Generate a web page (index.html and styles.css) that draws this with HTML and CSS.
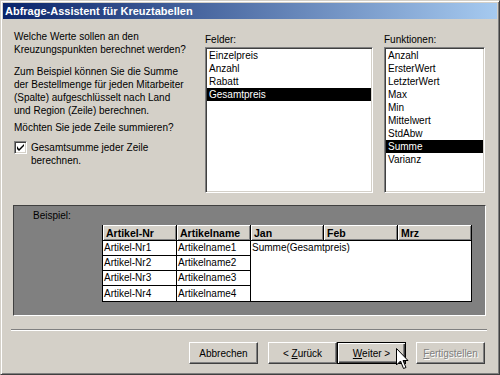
FILE: index.html
```html
<!DOCTYPE html>
<html lang="de">
<head>
  <meta charset="UTF-8">
  <title>Abfrage-Assistent für Kreuztabellen</title>
  <link rel="stylesheet" href="styles.css">
</head>
<body>
  <div class="window">
    <div class="titlebar">Abfrage-Assistent für Kreuztabellen</div>

    <div class="main">
      <!-- Oben: Text + Listen -->
      <div class="top">
        <div class="intro">
          <p class="p1">Welche Werte sollen an den<br>Kreuzungspunkten berechnet werden?</p>
          <p class="p2">Zum Beispiel können Sie die Summe<br>der Bestellmenge für jeden Mitarbeiter<br>(Spalte) aufgeschlüsselt nach Land<br>und Region (Zeile) berechnen.</p>
          <p class="p3">Möchten Sie jede Zeile summieren?</p>
          <label class="check">
            <span class="box">
              <svg width="7" height="7" viewBox="0 0 7 7"><path d="M0 2v3l2 2 5-5V-0L2 5z" fill="#000"/></svg>
            </span>
            <span>Gesamtsumme jeder Zeile<br>berechnen.</span>
          </label>
        </div>

        <div class="col-fields">
          <div class="label">Felder:</div>
          <ul class="listbox fields">
            <li>Einzelpreis</li>
            <li>Anzahl</li>
            <li>Rabatt</li>
            <li class="selected">Gesamtpreis</li>
          </ul>
        </div>

        <div class="col-funcs">
          <div class="label">Funktionen:</div>
          <ul class="listbox funcs">
            <li>Anzahl</li>
            <li>ErsterWert</li>
            <li>LetzterWert</li>
            <li>Max</li>
            <li>Min</li>
            <li>Mittelwert</li>
            <li>StdAbw</li>
            <li class="selected">Summe</li>
            <li>Varianz</li>
          </ul>
        </div>
      </div>

      <!-- Beispiel -->
      <div class="sample">
        <div class="sample-label">Beispiel:</div>
        <table class="sample-grid">
          <colgroup>
            <col class="c74"><col class="c74"><col class="c73"><col class="c74"><col class="c74">
          </colgroup>
          <tr>
            <th>Artikel-Nr</th><th>Artikelname</th><th>Jan</th><th>Feb</th><th>Mrz</th>
          </tr>
          <tr>
            <td>Artikel-Nr1</td><td>Artikelname1</td>
            <td class="values" colspan="3" rowspan="4">Summe(Gesamtpreis)</td>
          </tr>
          <tr><td>Artikel-Nr2</td><td>Artikelname2</td></tr>
          <tr><td>Artikel-Nr3</td><td>Artikelname3</td></tr>
          <tr class="last"><td>Artikel-Nr4</td><td>Artikelname4</td></tr>
        </table>
      </div>

      <div class="separator"></div>

      <div class="buttons">
        <button class="btn cancel">Abbrechen</button>
        <button class="btn">&lt; <u>Z</u>urück</button>
        <button class="btn default"><u>W</u>eiter &gt;</button>
        <button class="btn disabled"><u>F</u>ertigstellen</button>
      </div>
    </div>

    <!-- Mauszeiger -->
    <svg class="cursor" width="13" height="22" viewBox="0 0 13 22">
      <path d="M0.5 0.5 V17 L4.5 13 L7.5 20.5 L10 19.5 L7 12.5 H12 Z" fill="#fff" stroke="#000" stroke-width="1"/>
    </svg>
  </div>
</body>
</html>
```

FILE: styles.css
```css
/* Grundlayout */
* { box-sizing: border-box; }
body {
  margin: 0;
  font-family: "Liberation Sans", Arial, sans-serif;
  font-size: 10px;
  color: #000;
  background: #d4d0c8;
}
ul, p { margin: 0; padding: 0; list-style: none; }

/* Fenster */
.window {
  position: relative;
  width: 500px;
  height: 375px;
  background: #d4d0c8;
  border: 1px solid;
  border-color: #d4d0c8 #404040 #404040 #d4d0c8;
  box-shadow: inset 1px 1px #fff, inset -1px -1px #808080;
  padding: 2px;
}
.titlebar {
  height: 16px;
  line-height: 16px;
  padding-left: 2px;
  color: #fff;
  font-weight: bold;
  font-size: 11px;
  background: linear-gradient(to right, #0a246a, #a6caf0);
}

/* Oberer Bereich */
.top {
  display: grid;
  grid-template-columns: 191px 179px 101px;
  padding: 11px 0 0 11px;
}
.intro { line-height: 13px; }
.intro .p2 { margin-top: 9px; }
.intro .p3 { margin-top: 4px; }
.check {
  display: flex;
  gap: 4px;
  margin-top: 7px;
}
.check .box {
  width: 13px;
  height: 13px;
  flex: none;
  background: #fff;
  border: 1px solid;
  border-color: #808080 #fff #fff #808080;
  box-shadow: inset 1px 1px #404040, inset -1px -1px #d4d0c8;
  display: flex;
  align-items: center;
  justify-content: center;
}
.label {
  margin-top: 3px;
  height: 14px;
  line-height: 13px;
}
.listbox {
  height: 146px;
  background: #fff;
  border: 1px solid;
  border-color: #808080 #fff #fff #808080;
  box-shadow: inset 1px 1px #404040, inset -1px -1px #d4d0c8;
  padding: 1px;
}
.fields { width: 168px; }
.funcs { width: 101px; }
.listbox li {
  height: 13px;
  line-height: 13px;
  padding-left: 2px;
  white-space: nowrap;
}
.listbox li.selected { background: #000; color: #fff; }

/* Beispiel */
.sample {
  margin: 12px 0 0 10px;
  width: 473px;
  height: 111px;
  background: #808080;
  border: 1px solid;
  border-color: #404040 #fff #fff #404040;
  padding: 3px 0 0 19px;
}
.sample-label { line-height: 13px; }
.sample-grid {
  margin: 3px 0 0 69px;
  border-collapse: separate;
  border-spacing: 0;
  table-layout: fixed;
  width: 369px;
  border-left: 1px solid #000;
  border-bottom: 1px solid #000;
}
.c73 { width: 73px; }
.c74 { width: 74px; }
.sample-grid th {
  height: 16px;
  padding: 0 0 0 3px;
  text-align: left;
  font-weight: bold;
  font-size: 10.5px;
  background: #d4d0c8;
  border-right: 1px solid #000;
  border-bottom: 1px solid #000;
  box-shadow: inset 1px 1px #fff, inset -1px -1px #808080;
  line-height: 14px;
}
.sample-grid td {
  height: 15px;
  padding: 0 0 0 1px;
  line-height: 14px;
  background: #fff;
  border-right: 1px solid #000;
  border-bottom: 1px solid #000;
  white-space: nowrap;
}
.sample-grid td.values { vertical-align: top; border-bottom: 0; }
.sample-grid tr.last td { border-bottom: 0; }

/* Trennlinie + Knöpfe */
.separator {
  margin: 13px 0 0 8px;
  width: 476px;
  border-top: 1px solid #808080;
  border-bottom: 1px solid #fff;
}
.buttons {
  display: flex;
  justify-content: flex-end;
  margin-top: 11px;
  padding-right: 12px;
}
.btn {
  width: 69px;
  height: 22px;
  padding: 0;
  font: inherit;
  color: #000;
  background: #d4d0c8;
  border: 1px solid;
  border-color: #fff #404040 #404040 #fff;
  box-shadow: inset -1px -1px #808080;
  border-radius: 0;
}
.btn.cancel { margin-right: 10px; }
.btn.default {
  margin-right: 10px;
  border: 1px solid #000;
  box-shadow: inset 1px 1px #fff, inset -1px -1px #404040, inset -2px -2px #808080;
}
.btn.disabled { color: #808080; text-shadow: 1px 1px #fff; }

.cursor {
  position: absolute;
  left: 395px;
  top: 347px;
}
```
